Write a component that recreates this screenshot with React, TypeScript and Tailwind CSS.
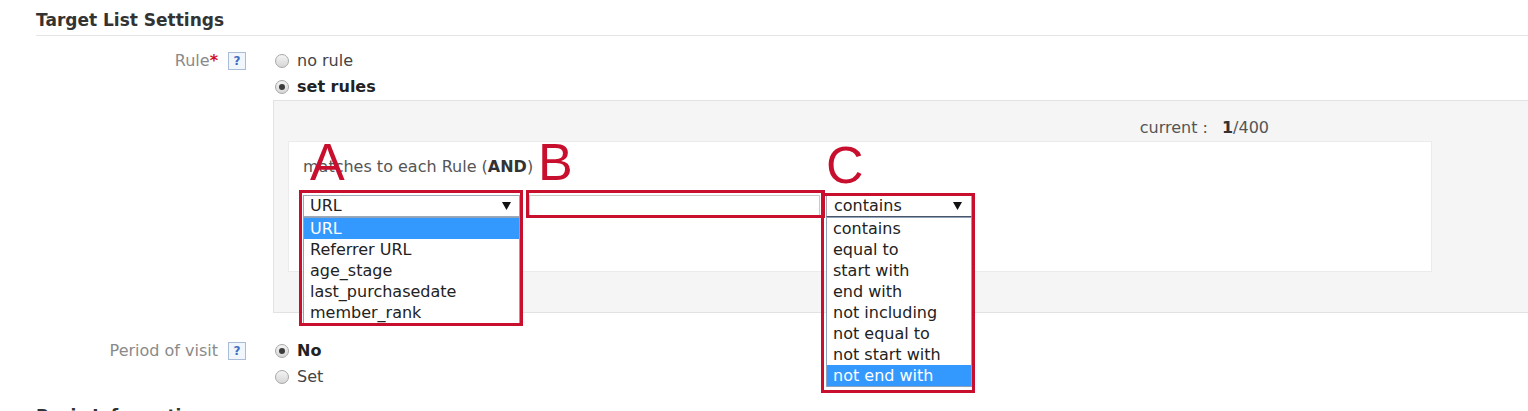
import React from "react";

function HelpIcon() {
  return (
    <span className="inline-flex items-center justify-center w-[18px] h-[18px] border border-[#a9bcd8] bg-[#f1f5fc] text-[#3f6fc2] text-[12px] font-bold leading-none">
      ?
    </span>
  );
}

function Radio({ checked, label, bold }: { checked?: boolean; label: string; bold?: boolean }) {
  return (
    <div className="flex items-center h-[26px]">
      <span className="ml-[2px] w-[14px] h-[14px] rounded-full border border-[#a8a8a8] bg-gradient-to-b from-[#f4f4f4] to-[#d6d6d6] flex items-center justify-center">
        {checked && <span className="w-[6px] h-[6px] rounded-full bg-[#3c3c3c]" />}
      </span>
      <span className={`ml-[8px] ${bold ? "font-bold text-[#222]" : "text-[#444]"}`}>{label}</span>
    </div>
  );
}

function Arrow() {
  return (
    <svg width="9" height="8" viewBox="0 0 9 8" className="shrink-0">
      <path d="M0 0h9L4.5 8z" fill="#111" />
    </svg>
  );
}

function FormLabel({ text, required }: { text: string; required?: boolean }) {
  return (
    <div className="w-[273px] shrink-0 flex justify-end items-center h-[26px] pr-[27px] gap-[10px]">
      <span className="text-[#8a8a8a]">
        {text}
        {required && <span className="text-[#d0102a] font-bold">*</span>}
      </span>
      <HelpIcon />
    </div>
  );
}

const fields = ["URL", "Referrer URL", "age_stage", "last_purchasedate", "member_rank"];
const operators = [
  "contains",
  "equal to",
  "start with",
  "end with",
  "not including",
  "not equal to",
  "not start with",
  "not end with",
];

export default function App() {
  return (
    <div className="w-[1528px] h-[411px] overflow-hidden bg-white font-['DejaVu_Sans',sans-serif] text-[16px] text-[#333]">
      <div className="pl-[36px] pt-[8px]">
        <h2 className="text-[17px] font-bold leading-[24px] text-[#333] pb-[3px] border-b border-[#e4e4e4]">
          Target List Settings
        </h2>
      </div>

      {/* Rule */}
      <div className="flex mt-[12px]">
        <FormLabel text="Rule" required />
        <div className="flex-1 min-w-0">
          <Radio label="no rule" />
          <Radio label="set rules" checked bold />
          <div className="w-[1300px] h-[213px] border border-[#e2e2e2] bg-[#f5f5f5] pl-[14px] pt-[15px]">
            <div className="w-[981px] text-right leading-[24px] text-[#555]">
              <span className="mr-[14px]">current :</span>
              <span className="font-bold text-[#333]">1</span>/400
            </div>
            <div className="mt-[1px] w-[1144px] h-[131px] border border-[#ebebeb] bg-white pl-[14px] pt-[13px]">
              <div className="leading-[24px] text-[#555]">
                matches to each Rule (<span className="font-bold text-[#333]">AND</span>)
              </div>
              <div className="relative mt-[16px] flex items-start">
                {/* field select */}
                <div className="relative w-[217px] h-[22px] border border-[#9ea9b6] bg-white flex items-center justify-between pl-[6px] pr-[8px] leading-[20px] text-[#222]">
                  <span>URL</span>
                  <Arrow />
                  <div className="absolute left-[-1px] top-[21px] w-[217px] border border-[#8ea2ba] bg-white z-10">
                    {fields.map((f, i) => (
                      <div
                        key={f}
                        className={`h-[21px] leading-[21px] pl-[6px] ${i === 0 ? "bg-[#3399ff] text-white" : "text-[#222]"}`}
                      >
                        {f}
                      </div>
                    ))}
                  </div>
                </div>

                {/* value input */}
                <div className="ml-[9px] w-[291px] h-[22px] border border-[#c9c9c9] bg-white" />

                {/* operator select */}
                <div className="relative ml-[6px] w-[146px] h-[22px] border border-[#9ea9b6] border-b-[#4a5568] bg-white flex items-center justify-between pl-[7px] pr-[9px] leading-[20px] text-[#222]">
                  <span>contains</span>
                  <Arrow />
                  <div className="absolute left-[-1px] top-[21px] w-[146px] border border-[#8ea2ba] bg-white z-10">
                    {operators.map((o, i) => (
                      <div
                        key={o}
                        className={`h-[21px] leading-[21px] pl-[6px] ${i === operators.length - 1 ? "bg-[#3399ff] text-white" : "text-[#222]"}`}
                      >
                        {o}
                      </div>
                    ))}
                  </div>
                </div>

                {/* annotation boxes */}
                <div className="absolute left-[-4px] top-[-5px] w-[224px] h-[136px] border-[3px] border-[#c8102e] z-20 pointer-events-none" />
                <div className="absolute left-[223px] top-[-5px] w-[299px] h-[28px] border-[3px] border-[#c8102e] z-20 pointer-events-none" />
                <div className="absolute left-[518px] top-[-2px] w-[154px] h-[200px] border-[3px] border-[#c8102e] z-20 pointer-events-none" />

                {/* annotation letters */}
                <span className="absolute left-[7px] top-[-59px] font-['Liberation_Sans',sans-serif] text-[52px] leading-[52px] text-[#c8102e] z-20">
                  A
                </span>
                <span className="absolute left-[235px] top-[-59px] font-['Liberation_Sans',sans-serif] text-[52px] leading-[52px] text-[#c8102e] z-20">
                  B
                </span>
                <span className="absolute left-[523px] top-[-56px] font-['Liberation_Sans',sans-serif] text-[52px] leading-[52px] text-[#c8102e] z-20">
                  C
                </span>
              </div>
            </div>
          </div>
        </div>
      </div>

      {/* Period of visit */}
      <div className="flex mt-[25px]">
        <FormLabel text="Period of visit" />
        <div className="flex-1 min-w-0">
          <Radio label="No" checked bold />
          <Radio label="Set" />
        </div>
      </div>

      <div className="pl-[36px] mt-[14px]">
        <h2 className="text-[17px] font-bold leading-[24px] text-[#333]">Basic Information</h2>
      </div>
    </div>
  );
}
